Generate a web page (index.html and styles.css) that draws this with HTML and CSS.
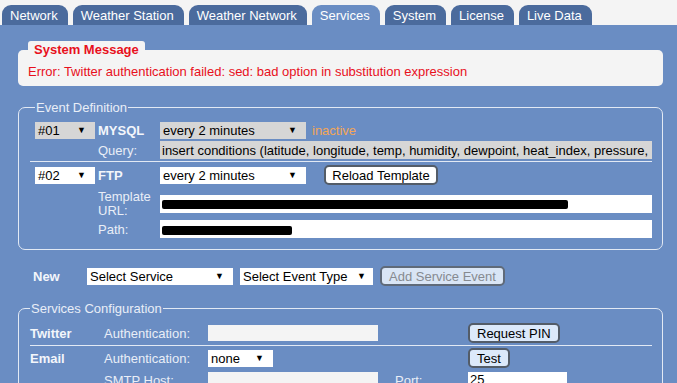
FILE: index.html
```html
<!DOCTYPE html>
<html lang="en">
<head>
  <meta charset="UTF-8" />
  <title>Services</title>
  <link rel="stylesheet" href="styles.css">
</head>
<body>

  <nav class="tabs">
    <a class="tab">Network</a>
    <a class="tab">Weather Station</a>
    <a class="tab">Weather Network</a>
    <a class="tab active">Services</a>
    <a class="tab">System</a>
    <a class="tab">License</a>
    <a class="tab">Live Data</a>
  </nav>

  <main class="panel">

    <fieldset class="sysmsg">
      <legend>System Message</legend>
      <p>Error: Twitter authentication failed: sed: bad option in substitution expression</p>
    </fieldset>

    <fieldset class="group events">
      <legend>Event Definition</legend>

      <div class="ev-row">
        <div class="select gray num">#01<span class="arr">&#9660;</span></div>
        <b class="svc">MYSQL</b>
        <div class="inline">
          <div class="select gray freq">every 2 minutes<span class="arr">&#9660;</span></div>
          <span class="status">inactive</span>
        </div>
      </div>
      <div class="ev-row">
        <span></span>
        <span class="lbl">Query:</span>
        <div class="input gray">insert conditions (latitude, longitude, temp, humidity, dewpoint, heat_index, pressure,</div>
      </div>

      <hr class="sep">

      <div class="ev-row tall">
        <div class="select num">#02<span class="arr">&#9660;</span></div>
        <b class="svc">FTP</b>
        <div class="inline">
          <div class="select freq">every 2 minutes<span class="arr">&#9660;</span></div>
          <button class="btn reload">Reload Template</button>
        </div>
      </div>
      <div class="ev-row url">
        <span></span>
        <span class="lbl">Template URL:</span>
        <div class="input"><span class="redact long"></span></div>
      </div>
      <div class="ev-row">
        <span></span>
        <span class="lbl">Path:</span>
        <div class="input"><span class="redact short"></span></div>
      </div>
    </fieldset>

    <div class="new-row">
      <b class="new-lbl">New</b>
      <div class="select service">Select Service<span class="arr">&#9660;</span></div>
      <div class="select evtype">Select Event Type<span class="arr">&#9660;</span></div>
      <button class="btn blue" disabled>Add Service Event</button>
    </div>

    <fieldset class="group services">
      <legend>Services Configuration</legend>

      <div class="svc-row">
        <b class="svc">Twitter</b>
        <span class="lbl">Authentication:</span>
        <div class="input light"></div>
        <span></span>
        <div><button class="btn blue active">Request PIN</button></div>
      </div>

      <hr class="sep">

      <div class="svc-row">
        <b class="svc">Email</b>
        <span class="lbl">Authentication:</span>
        <div><div class="select none">none<span class="arr">&#9660;</span></div></div>
        <span></span>
        <div><button class="btn blue active">Test</button></div>
      </div>
      <div class="svc-row">
        <span></span>
        <span class="lbl">SMTP Host:</span>
        <div class="input light"></div>
        <span class="lbl port">Port:</span>
        <div class="input port-val">25</div>
      </div>
    </fieldset>

  </main>

</body>
</html>
```

FILE: styles.css
```css
:root {
  --color-page: #f4f4f4;
  --color-tab: #4b6b9d;
  --color-panel: #6a8dc3;
  --color-line: #e2e9f4;
  --color-label: #e9eef7;
  --color-error: #e8101c;
  --color-status: #f3a657;
}

* {
  margin: 0;
  padding: 0;
  box-sizing: border-box;
}

html {
  overflow: hidden;
}

body {
  font-family: "Liberation Sans", Arial, sans-serif;
  font-size: 13px;
  background: var(--color-page);
  color: #000;
}

/* tabs */

.tabs {
  display: flex;
  gap: 5px;
  padding: 5px 0 0 2px;
}

.tab {
  display: block;
  height: 20px;
  line-height: 21px;
  padding: 0 10px 0 8px;
  background: var(--color-tab);
  color: #fff;
  border-radius: 9px 9px 0 0;
}

.tab.active {
  background: var(--color-panel);
}

.panel {
  background: var(--color-panel);
  min-height: 400px;
  padding: 16px 14px 20px 18px;
}

/* system message */

.sysmsg {
  border: none;
  background: var(--color-page);
  border-radius: 5px;
  padding: 0 10px 7px;
  color: var(--color-error);
}

.sysmsg legend {
  background: var(--color-page);
  border-radius: 3px 3px 0 0;
  padding: 1px 6px 0;
  font-weight: bold;
  line-height: 16px;
}

.sysmsg p {
  margin-top: 6px;
  line-height: 15px;
}

/* fieldsets */

.group {
  border: 1px solid var(--color-line);
  border-radius: 7px;
  padding: 0 10px 10px 11px;
  color: var(--color-label);
}

.group legend {
  padding: 0 1px;
  line-height: 15px;
}

.events {
  margin-top: 14px;
  padding-left: 16px;
}

.services {
  margin-top: 15px;
  padding-bottom: 30px;
}

.sep {
  border: none;
  border-top: 1px solid var(--color-line);
  margin: 1px 0 1px -5px;
}

.services .sep {
  margin-left: 0;
}

.ev-row {
  display: grid;
  grid-template-columns: 63px 62px 1fr;
  align-items: center;
  height: 20px;
}

.events legend + .ev-row {
  margin-top: 5px;
}

.ev-row.tall {
  height: 24px;
}

.ev-row.url {
  height: 31px;
  margin-top: 1px;
}

.ev-row.url .lbl {
  line-height: 14px;
  padding-right: 8px;
}

.svc {
  color: #f3f6fb;
  font-weight: bold;
}

.lbl {
  color: var(--color-label);
}

.inline {
  display: flex;
  align-items: center;
}

.status {
  color: var(--color-status);
  margin-left: 6px;
}

/* form controls */

.select {
  display: flex;
  justify-content: space-between;
  align-items: center;
  height: 17px;
  padding: 0 9px 0 3px;
  background: #fff;
  color: #000;
  white-space: nowrap;
}

.select.gray,
.input.gray {
  background: #d6d6d6;
}

.arr {
  font-size: 9px;
  margin-left: 4px;
}

.num { width: 60px; }
.freq { width: 146px; }
.service { width: 146px; }
.evtype { width: 133px; padding-right: 7px; }
.none { width: 65px; }

.input {
  display: flex;
  align-items: center;
  height: 18px;
  padding: 0 2px;
  background: #fff;
  color: #000;
  white-space: nowrap;
  overflow: hidden;
}

.input.light {
  background: var(--color-page);
  height: 16px;
  width: 170px;
}

.input.port-val {
  width: 99px;
  height: 17px;
  align-items: flex-start;
  line-height: 15px;
}

.redact {
  display: inline-block;
  height: 9px;
  margin-top: 2px;
  background: #000;
  border-radius: 2px;
}

.redact.long { width: 406px; }
.redact.short { width: 130px; }

.btn {
  font-family: inherit;
  font-size: 13px;
  height: 20px;
  padding: 0 5px;
  border: 2px solid #535c68;
  border-radius: 5px;
  background: #fff;
  color: #000;
}

.reload {
  margin-left: 18px;
  width: 114px;
}

.btn.blue {
  background: #d9e5f5;
  color: #868a90;
  border-color: #5f6a79;
  padding: 0 7px;
}

.btn.blue.active {
  background: #dce9fa;
  color: #000;
  border-color: #535c68;
}

/* new service */

.new-row {
  display: flex;
  align-items: center;
  gap: 7px;
  margin-top: 16px;
  padding-left: 15px;
  height: 20px;
}

.new-lbl {
  color: #f3f6fb;
  width: 47px;
}

/* services configuration */

.svc-row {
  display: grid;
  grid-template-columns: 74px 104px 170px 90px 1fr;
  align-items: center;
  height: 22px;
}

.services legend + .svc-row {
  margin-top: 6px;
}

.lbl.port {
  padding-left: 17px;
}
```
